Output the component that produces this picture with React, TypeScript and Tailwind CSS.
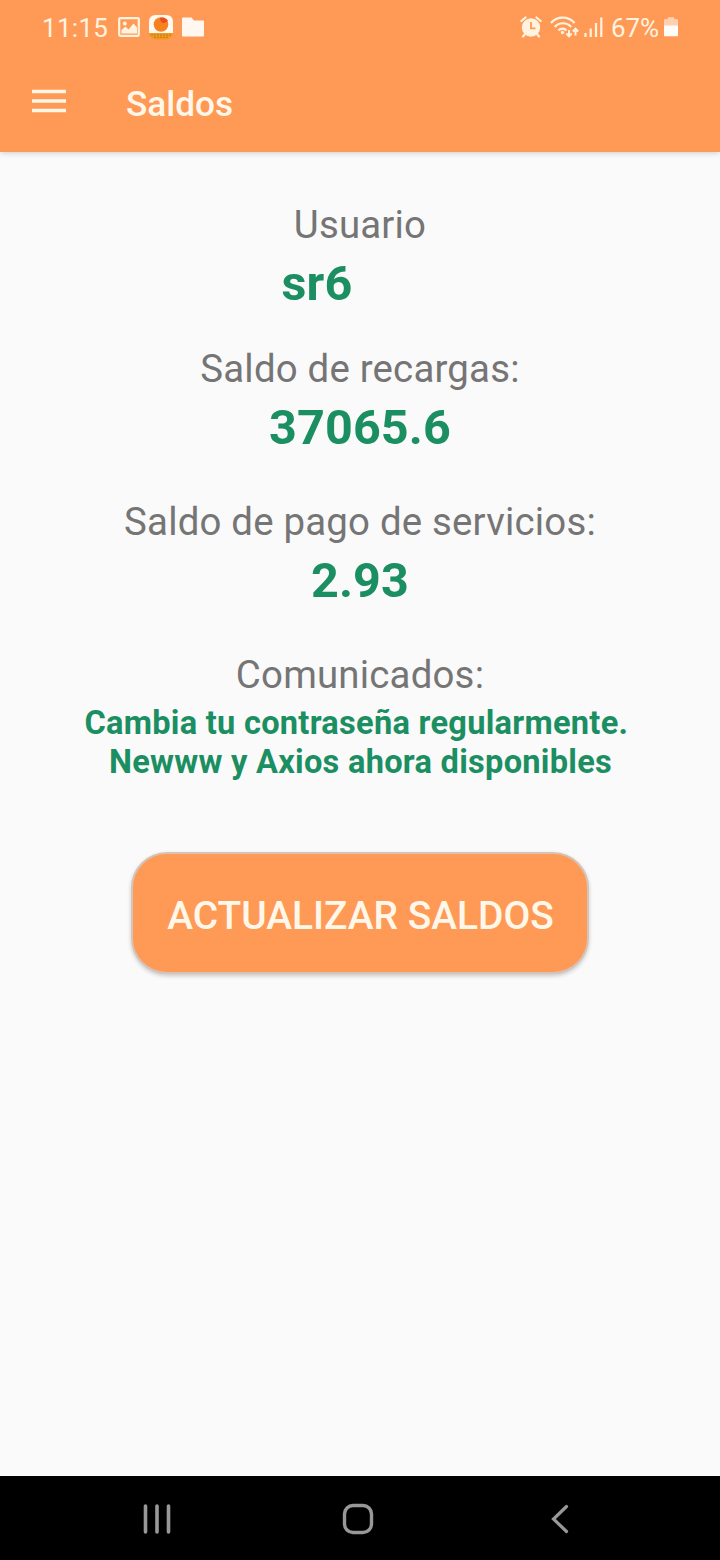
import type { ReactNode } from "react";

function StatusBar() {
  return (
    <div className="flex h-14 items-center justify-between pl-[42px] pr-[42px] text-[#fff3e0]">
      <div className="flex items-center">
        <span className="w-[76px] text-[26px] leading-8 tracking-[0.3px]">11:15</span>
        <svg width="22" height="20" viewBox="0 0 22 20" className="mr-[8px] -mt-0.5">
          <rect x="1.2" y="1.2" width="19.6" height="17.6" rx="1" fill="none" stroke="currentColor" strokeWidth="2.2" />
          <circle cx="6.8" cy="6.5" r="2" fill="currentColor" />
          <path d="M3.5 16.500V13l4-3.500 3 3 5-6 3.500 4v6z" fill="currentColor" />
        </svg>
        <svg width="26" height="26" viewBox="0 0 26 26" className="mr-[8px] -mt-0.5">
          <path d="M1 20V8q0-7 7-7h10q7 0 7 7v12z" fill="#fffaf0" />
          <path d="M0.500 19h25c-.8 4-4 6.500-8 6.500h-9c-4 0-7.200-2.500-8-6.500z" fill="#f09a24" />
          <path d="M3 21h20M6 23.300h14" stroke="#c9780f" strokeWidth="1" strokeDasharray="2 1" />
          <circle cx="13" cy="10.500" r="7.300" fill="#f5821f" />
          <path d="M12 4c3-1.500 6.500 0 8 3-2 .5-3 2.500-5 2-2-.5-3-3-3-5z" fill="#f04a1d" />
        </svg>
        <svg width="22" height="20" viewBox="0 0 22 20" className="-mt-0.5">
          <path d="M0 1.500Q0 .5 1 .5h8.500l2.500 3h9q1 0 1 1v14q0 1-1 1H1q-1 0-1-1z" fill="#fff8f0" />
        </svg>
      </div>
      <div className="flex items-center">
        <svg width="22" height="22" viewBox="0 0 22 22" className="mr-[8px] -mt-0.5">
          <circle cx="11" cy="11.500" r="9.200" fill="currentColor" />
          <path d="M1.300 5 5.500 1.500M20.700 5 16.500 1.500M5 18l-2 2.500M17 18l2 2.500" stroke="currentColor" strokeWidth="2.200" strokeLinecap="round" />
          <path d="M11 6v6.300h4.500" stroke="#ff9a56" strokeWidth="1.800" fill="none" />
        </svg>
        <svg width="30" height="22" viewBox="0 0 30 22" className="mr-[4px] -mt-0.5">
          <g fill="none" stroke="currentColor" strokeWidth="2.200">
            <path d="M1 7c6-7.300 17.500-7.300 23.500 0" />
            <path d="M4.700 11c4.300-5 12.100-5 16.500 0" />
            <path d="M8.500 14.500c2.300-2.500 5.800-2.500 8 0" />
          </g>
          <circle cx="12.500" cy="16.500" r="1.700" fill="currentColor" />
          <path d="M19 14v6M16.300 17.500l2.700 2.800 2.700-2.800M25.500 19.500v-6M22.800 15.500l2.700-2.800 2.700 2.800" stroke="currentColor" strokeWidth="1.900" fill="none" />
        </svg>
        <svg width="20" height="22" viewBox="0 0 20 22" className="mr-[7px] -mt-0.5">
          <path d="M1.500 17v4M6.700 12.500V21M12 7v14M17.300 1.500V21" stroke="currentColor" strokeWidth="2.200" />
        </svg>
        <span className="w-[53px] text-[26px] leading-8 tracking-[-0.1px]">67%</span>
        <svg width="14" height="22" viewBox="0 0 15 22" className="-mt-0.5">
          <path d="M0 9V4q0-1.500 1.500-1.500H4V1q0-.5.5-.5h6q.5 0 .5.500v1.500h2.500Q15 2.500 15 4v5z" fill="#ffd0ae" />
          <path d="M0 9h15v11q0 1-1 1H1q-1 0-1-1z" fill="#fffdf8" />
        </svg>
      </div>
    </div>
  );
}

function Label({ children }: { children: ReactNode }) {
  return <p className="h-12 text-[38.4px] leading-[48px] tracking-[0.2px] text-[#757575]">{children}</p>;
}

function Value({ children }: { children: ReactNode }) {
  return <p className="mt-[7px] h-[55px] text-[48.5px] font-bold leading-[56px] tracking-[0.15px] text-[#1b8f62]">{children}</p>;
}

export default function App() {
  return (
    <div className="flex h-[1560px] w-[720px] flex-col overflow-hidden bg-[#fafafa] font-[Roboto,sans-serif]">
      <header className="z-10 h-[152px] shrink-0 bg-[#ff9a56] shadow-[0_1px_6px_rgba(0,0,0,0.18)]">
        <StatusBar />
        <div className="flex h-24 items-center pl-8">
          <button aria-label="Menú" className="mb-[6px] mr-[60px]">
            <svg width="34" height="24" viewBox="0 0 34 24" className="block">
              <path d="M0 2.500h34M0 12h34M0 21.500h34" stroke="#fff6e6" strokeWidth="3.600" />
            </svg>
          </button>
          <h1 className="text-[35.2px] font-medium leading-[41px] text-[#fff8ea]">Saldos</h1>
        </div>
      </header>
      <main className="flex flex-1 flex-col items-center pt-[49px] text-center">
        <section>
          <Label>Usuario</Label>
          <div className="pr-[86px]">
            <Value>sr6</Value>
          </div>
        </section>
        <section className="mt-[34px]">
          <Label>Saldo de recargas:</Label>
          <Value>37065.6</Value>
        </section>
        <section className="mt-[43px]">
          <Label>Saldo de pago de servicios:</Label>
          <Value>2.93</Value>
        </section>
        <section className="mt-[43px]">
          <Label>Comunicados:</Label>
        </section>
        <p className="mt-[5px] whitespace-pre pl-px text-[32.6px] font-bold leading-[39px] tracking-[0.27px] text-[#1b8f62]">
          {"Cambia tu contraseña regularmente. \nNewww y Axios ahora disponibles"}
        </p>
        <button className="mt-[70px] flex h-[122px] w-[458px] items-center justify-center rounded-[36px] border-2 border-[#d6c2b6] bg-[#ff9a56] pl-px pt-1.5 text-[38.9px] font-medium text-[#fff8ea] shadow-[0_2px_4px_rgba(0,0,0,0.2)]">
          ACTUALIZAR SALDOS
        </button>
      </main>
      <nav className="flex h-[84px] shrink-0 items-center bg-black pl-[143px] pt-0.5 text-[#989898]">
        <svg width="28" height="30" viewBox="0 0 28 30" className="mr-[171px]">
          <path d="M2.500 2v26M14 2v26M25.500 2v26" stroke="currentColor" strokeWidth="3.600" strokeLinecap="round" />
        </svg>
        <svg width="32" height="32" viewBox="0 0 32 32" className="mr-[177px]">
          <rect x="2.500" y="2.500" width="27" height="27" rx="8.500" fill="none" stroke="currentColor" strokeWidth="3.400" />
        </svg>
        <svg width="18" height="30" viewBox="0 0 18 30">
          <path d="M15.500 2.500 2.500 15l13 12.500" fill="none" stroke="currentColor" strokeWidth="3.200" strokeLinecap="round" />
        </svg>
      </nav>
    </div>
  );
}
